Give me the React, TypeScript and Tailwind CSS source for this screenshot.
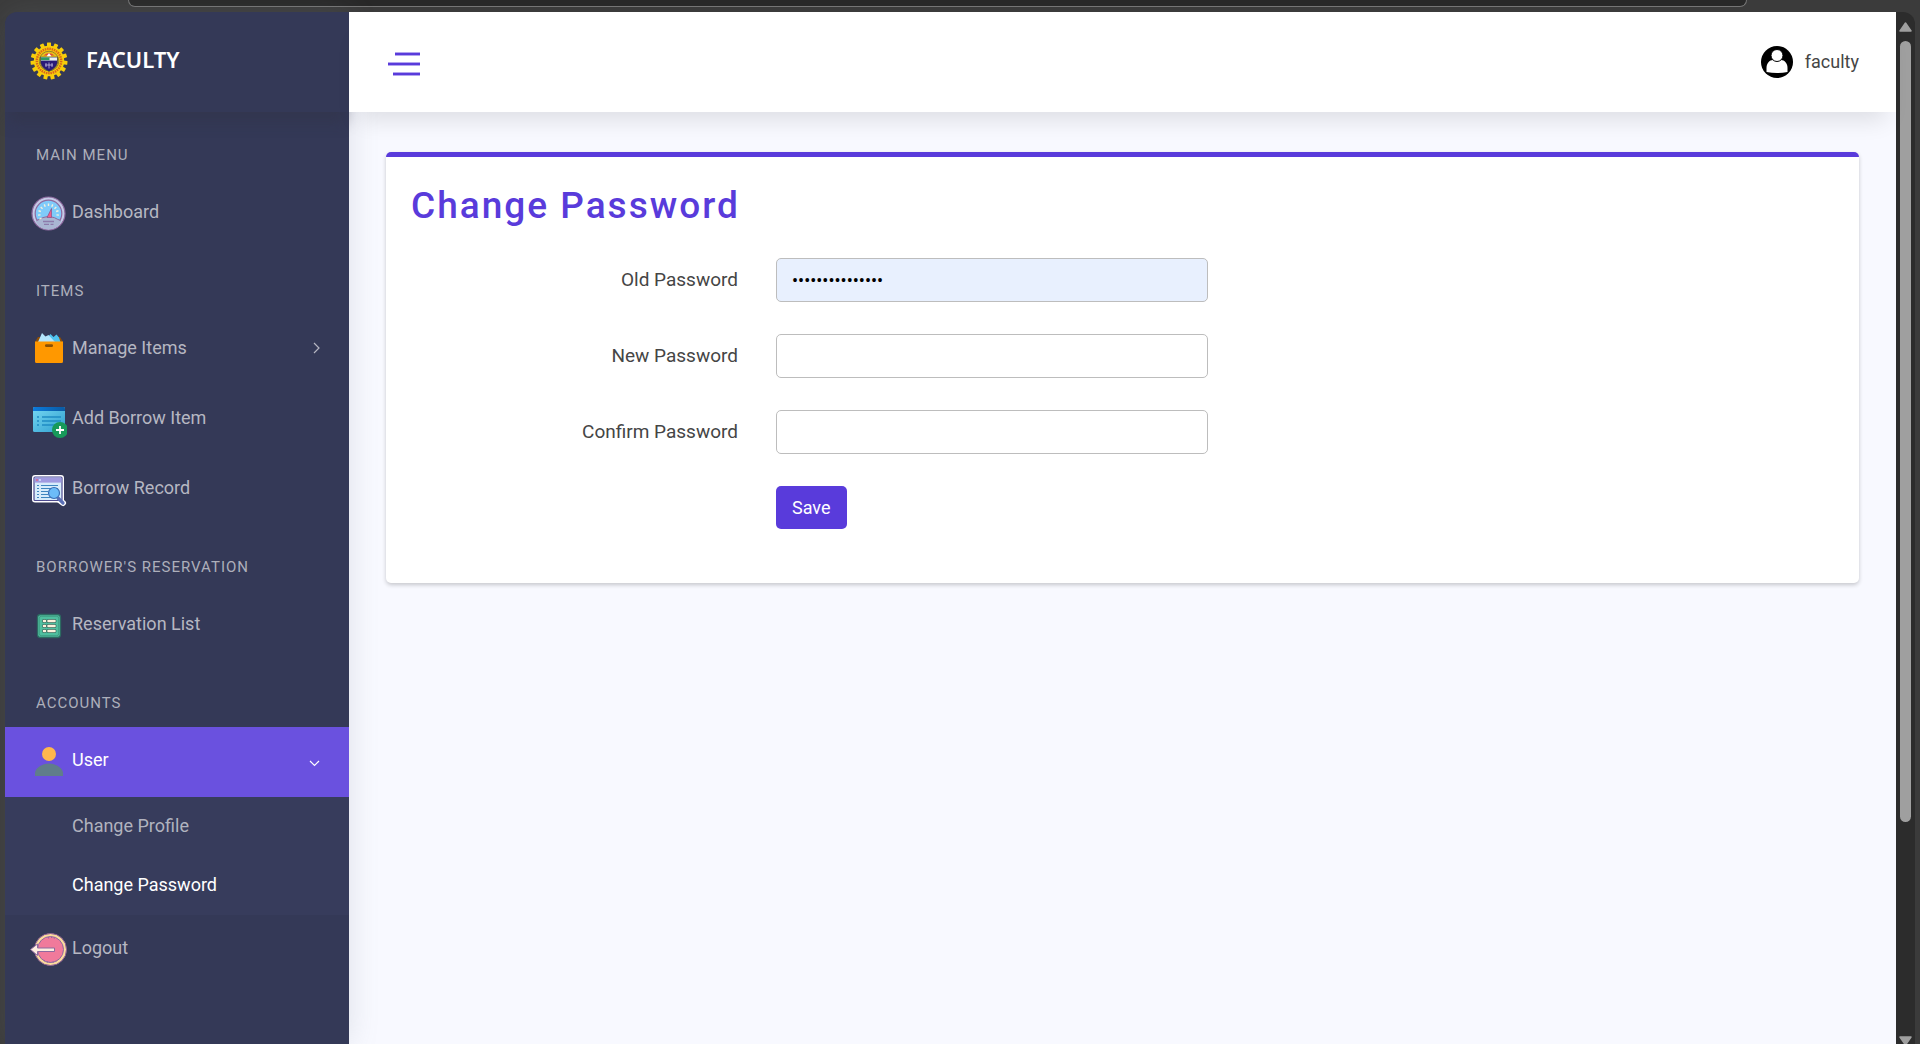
import type { ReactNode } from "react";

function SealLogo() {
  const teeth = Array.from({ length: 15 }, (_, i) => i * 24);
  return (
    <svg viewBox="0 0 38 38" className="size-[38px] shrink-0" aria-hidden="true">
      {teeth.map((a) => (
        <rect key={a} x="17" y="0.5" width="4" height="6" rx="0.5" fill="#f7cd0a" transform={`rotate(${a} 19 19)`} />
      ))}
      <circle cx="19" cy="19" r="15.2" fill="#f7cd0a" />
      <circle cx="19" cy="19" r="12.2" fill="none" stroke="#d9641c" strokeWidth="2.4" strokeDasharray="1.5 0.8" />
      <circle cx="19" cy="19" r="9.8" fill="#e9c21a" stroke="#6b6136" strokeWidth="0.7" />
      <path d="M13.500 13.500q5.500-5 11 0z" fill="#e0453a" />
      <path d="M16.500 14.500h5l-2.500-3.500z" fill="#fff" />
      <path d="M10.500 15h17v6q-1.500 5.500-8.500 8.500-7-3-8.500-8.500z" fill="#2a1a78" stroke="#5e5a30" strokeWidth="0.6" />
      <path d="M11 15.400h16v3.200H11z" fill="#e9f2f0" />
      <path d="M11 15.400h8.500v2.800H11z" fill="#2f9a63" />
      <path d="M16 21v4M19 20.500v6M22 21v4M15 23h8" stroke="#d8d4ee" strokeWidth="0.7" />
    </svg>
  );
}

function DashboardIcon() {
  const ticks = [-120, -96, -72, -48, -24, 0, 24, 48, 72, 96];
  return (
    <svg viewBox="0 0 36 36" className="size-9" aria-hidden="true">
      <circle cx="17.500" cy="17.500" r="16.500" fill="#c5cbe6" stroke="#8d6a9f" strokeWidth="1.200" />
      <circle cx="17.500" cy="17.500" r="13.300" fill="#7fcbfa" stroke="#8d6a9f" strokeWidth="1.200" />
      <path d="M4.500 25q4-1.500 7-3.300 6-2.700 12 0 3 1.800 7 3.300-4 8.500-13 8.500T4.500 25z" fill="#aab6d3" />
      <path d="M5.500 24.600q3.500-1.500 6-2.900 6-2.700 12 0 2.500 1.400 6 2.900" fill="none" stroke="#8d6a9f" strokeWidth="1" />
      {ticks.map((a) => (
        <path key={a} d="M17.500 7.500v2.500" stroke="#f4f0dc" strokeWidth="1.400" transform={`rotate(${a} 17.5 18)`} />
      ))}
      <path d="M20.500 12.500v9h-4.500z" fill="#ee5f8b" stroke="#8d4f86" strokeWidth="0.700" />
      <path d="M12 25.500h11M13 28.300h5M19.500 28.300h3" stroke="#8d7bab" strokeWidth="1.300" />
    </svg>
  );
}

function BoxIcon() {
  return (
    <svg viewBox="0 0 36 36" className="size-9" aria-hidden="true">
      <path d="M4 10l3-5h22l3 5z" fill="#8f4f06" />
      <path d="M16 6l3.500-4 3 3 3-2.500L28 5.500l1.500 4.500H19z" fill="#4fc3f0" />
      <path d="M7 10l4-9 3.500 3.500 3-1.500L24 10z" fill="#b3e5fc" />
      <path d="M4 9.500h28v20a1.500 1.500 0 0 1-1.500 1.500h-25A1.500 1.500 0 0 1 4 29.500z" fill="#ff9800" />
      <rect x="14" y="12.300" width="8" height="2.700" rx="1.200" fill="#8a5105" />
    </svg>
  );
}

function AddListIcon() {
  return (
    <svg viewBox="0 0 36 36" className="size-9" aria-hidden="true">
      <defs>
        <linearGradient id="list-body" x1="0" y1="0" x2="1" y2="1">
          <stop offset="0" stopColor="#76d8f2" />
          <stop offset="1" stopColor="#2f9fd0" />
        </linearGradient>
        <linearGradient id="list-head" x1="0" y1="0" x2="1" y2="0">
          <stop offset="0" stopColor="#0c7bdc" />
          <stop offset="1" stopColor="#0a5aa3" />
        </linearGradient>
      </defs>
      <rect x="2" y="5" width="32" height="25" rx="1.500" fill="url(#list-body)" />
      <path d="M3.500 5h29A1.500 1.500 0 0 1 34 6.500V9H2V6.500A1.500 1.500 0 0 1 3.500 5z" fill="url(#list-head)" />
      <path d="M6 15h2M6 19h2M6 23h2M11 15h19M11 19h19M11 23h13" stroke="#1f8cc4" strokeWidth="1.700" />
      <circle cx="29" cy="28" r="8" fill="#17995a" />
      <path d="M29 24v8M25 28h8" stroke="#fff" strokeWidth="1.800" />
    </svg>
  );
}

function RecordIcon() {
  return (
    <svg viewBox="0 0 36 36" className="size-9" aria-hidden="true">
      <path d="M27 27l5 4" stroke="#fff" strokeWidth="6" strokeLinecap="round" />
      <rect x="1" y="3" width="32" height="27.500" rx="3" fill="#fff" />
      <rect x="3" y="5" width="28" height="23.500" rx="1" fill="#d7ecfb" stroke="#4d4a8f" strokeWidth="1.200" />
      <path d="M3.600 5.600h26.800v5H3.600z" fill="#a09ae0" />
      <circle cx="6" cy="8" r="0.900" fill="#e8607c" />
      <circle cx="9" cy="8" r="0.900" fill="#d9ecff" />
      <path d="M6 13.500h2M6 16.500h2M6 19.500h2M6 22.500h2M6 25.500h2M10 13.500h17M10 16.500h17M10 19.500h7M10 22.500h7M10 25.500h10" stroke="#3f86bf" strokeWidth="1.100" />
      <path d="M27 26l5 5" stroke="#5a6fb5" strokeWidth="3.200" strokeLinecap="round" />
      <circle cx="23" cy="21" r="5.500" fill="#6cbcf8" stroke="#3a6fb5" strokeWidth="1.200" />
    </svg>
  );
}

function ReservationIcon() {
  return (
    <svg viewBox="0 0 36 36" className="size-9" aria-hidden="true">
      <rect x="6.500" y="6.500" width="23" height="23" rx="3" fill="#4fbf9f" stroke="#2c6a61" strokeWidth="1.300" />
      <rect x="8.300" y="8.300" width="19.400" height="19.400" rx="2" fill="none" stroke="#3a8f79" strokeWidth="0.700" />
      <path d="M13 13h1M13 18h1M13 23h1M17.500 13h6M17.500 18h6M17.500 23h6" stroke="#33685c" strokeWidth="4" strokeLinecap="round" />
      <path d="M13 13h1M13 18h1M13 23h1M17.500 13h6M17.500 18h6M17.500 23h6" stroke="#fbf1dc" strokeWidth="2.600" strokeLinecap="round" />
    </svg>
  );
}

function UserIcon() {
  return (
    <svg viewBox="0 0 36 36" className="size-9" aria-hidden="true">
      <circle cx="18" cy="10" r="7" fill="#ffb74d" />
      <path d="M4 32v-3c0-4 6-9.500 14-9.500S32 25 32 29v3z" fill="#607d8b" />
    </svg>
  );
}

function LogoutIcon() {
  return (
    <svg viewBox="0 0 36 36" className="size-9 overflow-visible" aria-hidden="true">
      <circle cx="19.500" cy="17.500" r="16" fill="#fbdc9c" stroke="#8d5f96" strokeWidth="1" />
      <circle cx="19.500" cy="17.500" r="13" fill="#f07a9b" stroke="#8d6a9f" strokeWidth="1" />
      <path d="M13 28.500q6.500 4 13 0M17 6q4-1.500 8 1" fill="none" stroke="#8d6a9f" strokeWidth="1.200" strokeDasharray="1 2" />
      <path d="M-.5 17.500l7-5.500v4h17v3.500h-17v4z" fill="#fdeee0" stroke="#8d6a9f" strokeWidth="1" strokeLinejoin="round" />
    </svg>
  );
}

function Chevron({ down = false }: { down?: boolean }) {
  return (
    <svg viewBox="0 0 12 16" className="h-4 w-3" fill="none" stroke="currentColor" strokeWidth="1.200" aria-hidden="true">
      {down ? <path d="M1 7l4.500 4.500L10 7" /> : <path d="M5 1l5 5-5 5" />}
    </svg>
  );
}

function NavLabel({ children }: { children: ReactNode }) {
  return (
    <h2 className="flex h-[66px] items-end px-[31px] pb-[14px] text-[15px] leading-5 tracking-[1px] text-[#adafbb] uppercase">
      {children}
    </h2>
  );
}

type NavItemProps = { icon: ReactNode; label: string; chevron?: ReactNode; active?: boolean };

function NavItem({ icon, label, chevron, active = false }: NavItemProps) {
  return (
    <a
      href="#"
      className={
        active
          ? "flex h-[70px] items-center bg-[#6a51df] pr-7 pl-[26px] text-white"
          : "flex h-[70px] items-center pr-7 pl-[26px] text-[#b6b7c2]"
      }
    >
      {icon}
      <span className="ml-[5px] flex-1 pb-1 text-[18px] leading-6">{label}</span>
      {chevron}
    </a>
  );
}

function Sidebar() {
  return (
    <aside className="z-10 flex w-[344px] shrink-0 flex-col rounded-tl-xl bg-[#343957] shadow-[0_0_30px_rgba(120,130,140,0.2)]">
      <div className="flex h-[100px] items-center rounded-tl-xl pb-0.5 pl-[25px] shadow-[0_14px_14px_-4px_rgba(50,52,72,0.5)]">
        <SealLogo />
        <span className="ml-[18px] pb-1 font-['Noto_Sans',sans-serif] text-[22px] leading-8 font-semibold text-white">FACULTY</span>
      </div>
      <nav className="pt-px">
        <NavLabel>Main Menu</NavLabel>
        <NavItem icon={<DashboardIcon />} label="Dashboard" />
        <NavLabel>Items</NavLabel>
        <NavItem icon={<BoxIcon />} label="Manage Items" chevron={<Chevron />} />
        <NavItem icon={<AddListIcon />} label="Add Borrow Item" />
        <NavItem icon={<RecordIcon />} label="Borrow Record" />
        <NavLabel>Borrower&apos;s Reservation</NavLabel>
        <NavItem icon={<ReservationIcon />} label="Reservation List" />
        <NavLabel>Accounts</NavLabel>
        <NavItem icon={<UserIcon />} label="User" active chevron={<Chevron down />} />
        <div className="bg-[#373c5c] text-[18px] leading-6">
          <a href="#" className="flex h-[59px] items-center pb-0.5 pl-[67px] text-[#b1b3bf]">Change Profile</a>
          <a href="#" className="flex h-[59px] items-center pb-0.5 pl-[67px] text-white">Change Password</a>
        </div>
        <NavItem icon={<LogoutIcon />} label="Logout" />
      </nav>
    </aside>
  );
}

function Header() {
  return (
    <header className="relative z-20 flex h-[100px] items-center justify-between bg-white pr-[37px] pl-[39px] shadow-[0_18px_22px_-10px_rgba(0,0,0,0.11)]">
      <button type="button" aria-label="Toggle menu" className="mt-1 flex w-8 flex-col items-end gap-[6px]">
        <span className="h-1 w-[25px] border-y border-[#b3a5ef] bg-[#593bdb]" />
        <span className="h-1 w-8 border-y border-[#b3a5ef] bg-[#593bdb]" />
        <span className="h-1 w-[27px] border-y border-[#b3a5ef] bg-[#593bdb]" />
      </button>
      <button type="button" className="flex items-center gap-3 text-[18px] leading-6 text-[#454545]">
        <svg viewBox="0 0 32 32" className="size-8" aria-hidden="true">
          <circle cx="16" cy="16" r="16" fill="#000" />
          <path d="M5.500 26V22c0-4.500 3-8 6.500-8h8c3.500 0 6.500 3.500 6.500 8v4q-10.500 2-21 0z" fill="#fff" />
          <circle cx="16" cy="9.500" r="6" fill="#fff" stroke="#000" strokeWidth="1" />
        </svg>
        <span className="pb-px">faculty</span>
      </button>
    </header>
  );
}

const fields = [
  { id: "old-password", label: "Old Password", value: "faculty12345678", filled: true },
  { id: "new-password", label: "New Password", value: "", filled: false },
  { id: "confirm-password", label: "Confirm Password", value: "", filled: false },
];

function PasswordCard() {
  return (
    <section className="rounded-[5px] border-t-[5px] border-[#593bdb] bg-white px-6 pt-[26px] pb-[54px] shadow-[0_2px_4px_rgba(0,0,0,0.2)]">
      <h1 className="pl-px text-[37px] leading-[45px] font-medium tracking-[2px] text-[#593bdb]">Change Password</h1>
      <form className="mt-[30px] flex flex-col gap-8">
        {fields.map((f) => (
          <div key={f.id} className="grid grid-cols-[328fr_432fr_589fr] items-center gap-x-[38px]">
            <label htmlFor={f.id} className="text-right text-[19px] leading-6 text-[#454545]">{f.label}</label>
            <input
              id={f.id}
              type="password"
              defaultValue={f.value}
              className={
                f.filled
                  ? "h-11 w-full rounded-[5px] border border-[#bdbdbd] bg-[#e8f0fe] px-[15px] text-[18px] text-black outline-none"
                  : "h-11 w-full rounded-[5px] border border-[#bdbdbd] bg-white px-[15px] text-[18px] text-black outline-none"
              }
            />
          </div>
        ))}
        <div className="grid grid-cols-[328fr_432fr_589fr] gap-x-[38px]">
          <button type="button" className="col-start-2 h-[43px] justify-self-start rounded-[5px] bg-[#593bdb] px-4 text-[18px] leading-6 text-white">
            Save
          </button>
        </div>
      </form>
    </section>
  );
}

function Scrollbar() {
  return (
    <div className="flex w-[19px] shrink-0 flex-col items-center justify-between rounded-tr-xl bg-[#2c2c2c] pt-[10px]" aria-hidden="true">
      <svg viewBox="0 0 13 10" className="h-[10px] w-[13px]">
        <path d="M6.500 1L12 9H1z" fill="#9f9f9f" stroke="#9f9f9f" strokeWidth="1.500" strokeLinejoin="round" />
      </svg>
      <div className="mt-[9px] flex w-full flex-1 justify-center">
        <div className="h-[78.5%] w-[11px] rounded-full bg-[#9f9f9f]" />
      </div>
      <svg viewBox="0 0 13 8" className="h-2 w-[13px]">
        <path d="M1 1h11L6.500 9z" fill="#9f9f9f" stroke="#9f9f9f" strokeWidth="1.500" strokeLinejoin="round" />
      </svg>
    </div>
  );
}

export default function App() {
  return (
    <div className="flex h-screen flex-col overflow-hidden bg-[#3b3b3b] font-[Roboto,sans-serif]">
      <div className="h-3 shrink-0 pr-[173px] pl-32">
        <div className="h-[7px] rounded-b-[16px] border border-t-0 border-[#757575] bg-[#282828]" />
      </div>
      <div className="flex min-h-0 flex-1 px-[5px]">
        <Sidebar />
        <div className="min-w-0 flex-1 bg-[#f8f9ff]">
          <Header />
          <main className="px-[37px] pt-10">
            <PasswordCard />
          </main>
        </div>
        <Scrollbar />
      </div>
    </div>
  );
}
